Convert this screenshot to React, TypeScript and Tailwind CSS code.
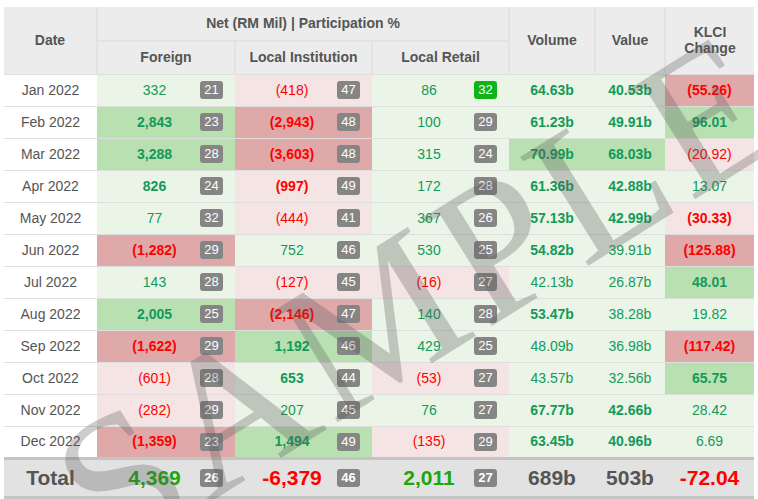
type S = "lg" | "sg" | "lr" | "sr";
type C = [string, S, boolean];
type Row = { d: string; f: C; fb: string; li: C; lib: string; lr: C; lrb: string; vol: C; val: C; k: C };

const bg: Record<S, string> = {
  lg: "bg-[#eaf5e7]",
  sg: "bg-[#b9e0b1]",
  lr: "bg-[#f5e4e4]",
  sr: "bg-[#e0a9a9]",
};

const rows: Row[] = [
  { d: "Jan 2022", f: ["332", "lg", false], fb: "21", li: ["(418)", "lr", false], lib: "47", lr: ["86", "lg", false], lrb: "32", vol: ["64.63b", "lg", true], val: ["40.53b", "lg", true], k: ["(55.26)", "sr", true] },
  { d: "Feb 2022", f: ["2,843", "sg", true], fb: "23", li: ["(2,943)", "sr", true], lib: "48", lr: ["100", "lg", false], lrb: "29", vol: ["61.23b", "lg", true], val: ["49.91b", "lg", true], k: ["96.01", "sg", true] },
  { d: "Mar 2022", f: ["3,288", "sg", true], fb: "28", li: ["(3,603)", "sr", true], lib: "48", lr: ["315", "lg", false], lrb: "24", vol: ["70.99b", "sg", true], val: ["68.03b", "sg", true], k: ["(20.92)", "lr", false] },
  { d: "Apr 2022", f: ["826", "lg", true], fb: "24", li: ["(997)", "lr", true], lib: "49", lr: ["172", "lg", false], lrb: "28", vol: ["61.36b", "lg", true], val: ["42.88b", "lg", true], k: ["13.07", "lg", false] },
  { d: "May 2022", f: ["77", "lg", false], fb: "32", li: ["(444)", "lr", false], lib: "41", lr: ["367", "lg", false], lrb: "26", vol: ["57.13b", "lg", true], val: ["42.99b", "lg", true], k: ["(30.33)", "lr", true] },
  { d: "Jun 2022", f: ["(1,282)", "sr", true], fb: "29", li: ["752", "lg", false], lib: "46", lr: ["530", "lg", false], lrb: "25", vol: ["54.82b", "lg", true], val: ["39.91b", "lg", false], k: ["(125.88)", "sr", true] },
  { d: "Jul 2022", f: ["143", "lg", false], fb: "28", li: ["(127)", "lr", false], lib: "45", lr: ["(16)", "lr", false], lrb: "27", vol: ["42.13b", "lg", false], val: ["26.87b", "lg", false], k: ["48.01", "sg", true] },
  { d: "Aug 2022", f: ["2,005", "sg", true], fb: "25", li: ["(2,146)", "sr", true], lib: "47", lr: ["140", "lg", false], lrb: "28", vol: ["53.47b", "lg", true], val: ["38.28b", "lg", false], k: ["19.82", "lg", false] },
  { d: "Sep 2022", f: ["(1,622)", "sr", true], fb: "29", li: ["1,192", "sg", true], lib: "46", lr: ["429", "lg", false], lrb: "25", vol: ["48.09b", "lg", false], val: ["36.98b", "lg", false], k: ["(117.42)", "sr", true] },
  { d: "Oct 2022", f: ["(601)", "lr", false], fb: "28", li: ["653", "lg", true], lib: "44", lr: ["(53)", "lr", false], lrb: "27", vol: ["43.57b", "lg", false], val: ["32.56b", "lg", false], k: ["65.75", "sg", true] },
  { d: "Nov 2022", f: ["(282)", "lr", false], fb: "29", li: ["207", "lg", false], lib: "45", lr: ["76", "lg", false], lrb: "27", vol: ["67.77b", "lg", true], val: ["42.66b", "lg", true], k: ["28.42", "lg", false] },
  { d: "Dec 2022", f: ["(1,359)", "sr", true], fb: "23", li: ["1,494", "sg", true], lib: "49", lr: ["(135)", "lr", false], lrb: "29", vol: ["63.45b", "lg", true], val: ["40.96b", "lg", true], k: ["6.69", "lg", false] },
];

const txt = (c: C) =>
  `${c[0].startsWith("(") ? "text-[#ff0000]" : "text-[#14995a]"} ${c[2] ? "font-bold" : ""}`;

function Badge({ n, green }: { n: string; green?: boolean }) {
  return (
    <span className={`w-[23px] h-[18px] rounded-[3px] text-white text-[13px] leading-[18px] text-center ${green ? "bg-[#10b418]" : "bg-[#858585]"}`}>
      {n}
    </span>
  );
}

function NCell({ c, b, green }: { c: C; b: string; green?: boolean }) {
  return (
    <td className={`${bg[c[1]]} p-0`}>
      <div className="flex items-center pl-[12px] pr-[12px]">
        <span className={`flex-1 text-center ${txt(c)}`}>{c[0]}</span>
        <Badge n={b} green={green} />
      </div>
    </td>
  );
}

function VCell({ c }: { c: C }) {
  return <td className={`${bg[c[1]]} text-center ${txt(c)}`}>{c[0]}</td>;
}

export default function App() {
  return (
    <div className="w-[758px] h-[499px] bg-white pt-[7px] pl-[4px] relative overflow-hidden" style={{ fontFamily: "'Liberation Sans', Arial, sans-serif" }}>
      <table className="w-[750px] border-collapse text-[14px] table-fixed">
        <colgroup>
          <col className="w-[93px]" />
          <col className="w-[138px]" />
          <col className="w-[137px]" />
          <col className="w-[137px]" />
          <col className="w-[86px]" />
          <col className="w-[70px]" />
          <col className="w-[89px]" />
        </colgroup>
        <thead className="text-[#555] font-bold bg-[#ececec]">
          <tr className="h-[34px]">
            <th rowSpan={2} className="border-r-2 border-[#e3e3e3]">Date</th>
            <th colSpan={3} className="border-b-2 border-[#e3e3e3]">Net (RM Mil) | Participation %</th>
            <th rowSpan={2} className="border-x-2 border-[#e3e3e3]">Volume</th>
            <th rowSpan={2} className="border-r-2 border-[#e3e3e3]">Value</th>
            <th rowSpan={2} className="leading-[16px]">KLCI<br />Change</th>
          </tr>
          <tr className="h-[33px]">
            <th className="border-r-2 border-[#e3e3e3]">Foreign</th>
            <th className="border-r-2 border-[#e3e3e3]">Local Institution</th>
            <th>Local Retail</th>
          </tr>
        </thead>
        <tbody>
          {rows.map((r, i) => (
            <tr key={r.d} className="h-[32px] border-t border-[#dedede]">
              <td className="text-center text-[#555] bg-white">{r.d}</td>
              <NCell c={r.f} b={r.fb} />
              <NCell c={r.li} b={r.lib} />
              <NCell c={r.lr} b={r.lrb} green={i === 0} />
              <VCell c={r.vol} />
              <VCell c={r.val} />
              <VCell c={r.k} />
            </tr>
          ))}
          <tr className="h-[39px] bg-[#e2e2e2] border-t-[3px] border-b-[3px] border-[#c4c4c4] text-[21px] font-bold">
            <td className="text-center text-[#555]">Total</td>
            <td className="p-0"><div className="flex items-center px-[12px]"><span className="flex-1 text-center text-[#1aa80f]">4,369</span><Badge n="26" /></div></td>
            <td className="p-0"><div className="flex items-center px-[12px]"><span className="flex-1 text-center text-[#ff0000]">-6,379</span><Badge n="46" /></div></td>
            <td className="p-0"><div className="flex items-center px-[12px]"><span className="flex-1 text-center text-[#1aa80f]">2,011</span><Badge n="27" /></div></td>
            <td className="text-center text-[#555]">689b</td>
            <td className="text-center text-[#555]">503b</td>
            <td className="text-center text-[#ff0000]">-72.04</td>
          </tr>
        </tbody>
      </table>
      <div
        className="absolute left-[14px] top-[196px] text-[196px] leading-none text-[rgba(90,90,90,0.3)] pointer-events-none rotate-[-32deg] origin-center tracking-[6px]"
        style={{ fontFamily: "'Liberation Serif', serif" }}
      >
        SAMPLE
      </div>
    </div>
  );
}
